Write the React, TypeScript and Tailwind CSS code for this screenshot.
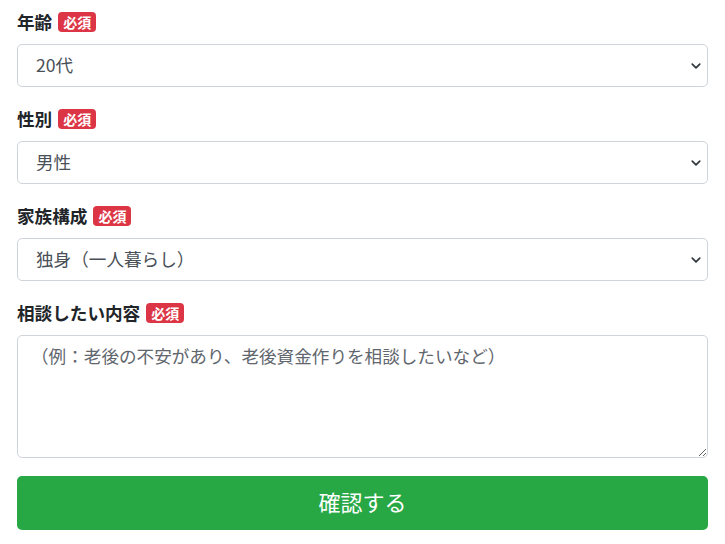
import { ReactNode } from "react";

const font = { fontFamily: '"Noto Sans CJK JP", "Noto Sans", sans-serif' };

const Label = ({ children }: { children: ReactNode }) => (
  <label className="flex items-center h-6 mb-2.5 text-[17.6px] font-bold text-[#212529]">
    {children}
    <span className="ml-1.5 inline-flex items-center h-5 px-[5px] rounded text-[14px] font-bold text-white bg-[#dc3545] leading-none">
      必須
    </span>
  </label>
);

const Select = ({ value, options }: { value: string; options: string[] }) => (
  <div className="relative">
    <select
      defaultValue={value}
      className="block w-full h-[43px] pl-[18px] pr-10 text-[17.6px] text-[#495057] bg-white border border-[#ced4da] rounded-[5px] appearance-none outline-none"
      style={font}
    >
      {options.map((o) => (
        <option key={o}>{o}</option>
      ))}
    </select>
    <svg
      className="absolute right-[7px] top-1/2 -translate-y-1/2 pointer-events-none"
      width="10"
      height="10"
      viewBox="0 0 16 16"
    >
      <path
        d="M2 5l6 6 6-6"
        fill="none"
        stroke="#343a40"
        strokeWidth="2.8"
        strokeLinecap="round"
        strokeLinejoin="round"
      />
    </svg>
  </div>
);

export default function App() {
  return (
    <div className="w-[725px] h-[544px] bg-white px-[17px] pt-[10px] overflow-hidden" style={font}>
      <div className="mb-5">
        <Label>年齢</Label>
        <Select value="20代" options={["10代", "20代", "30代", "40代", "50代", "60代以上"]} />
      </div>
      <div className="mb-5">
        <Label>性別</Label>
        <Select value="男性" options={["男性", "女性"]} />
      </div>
      <div className="mb-5">
        <Label>家族構成</Label>
        <Select value="独身（一人暮らし）" options={["独身（一人暮らし）", "夫婦のみ", "夫婦と子供"]} />
      </div>
      <div>
        <Label>相談したい内容</Label>
        <textarea
          placeholder="（例：老後の不安があり、老後資金作りを相談したいなど）"
          className="block w-full h-[123px] pl-[13px] pr-3 pt-[7px] pb-2 text-[17.6px] leading-[1.5] text-[#495057] placeholder:text-[#5f666d] bg-white border border-[#ced4da] rounded-[5px] outline-none"
          style={font}
        />
      </div>
      <button
        className="block w-full h-[54px] mt-[18px] pb-1 rounded-[5px] bg-[#28a745] text-white text-[22px]"
        style={font}
      >
        確認する
      </button>
    </div>
  );
}
